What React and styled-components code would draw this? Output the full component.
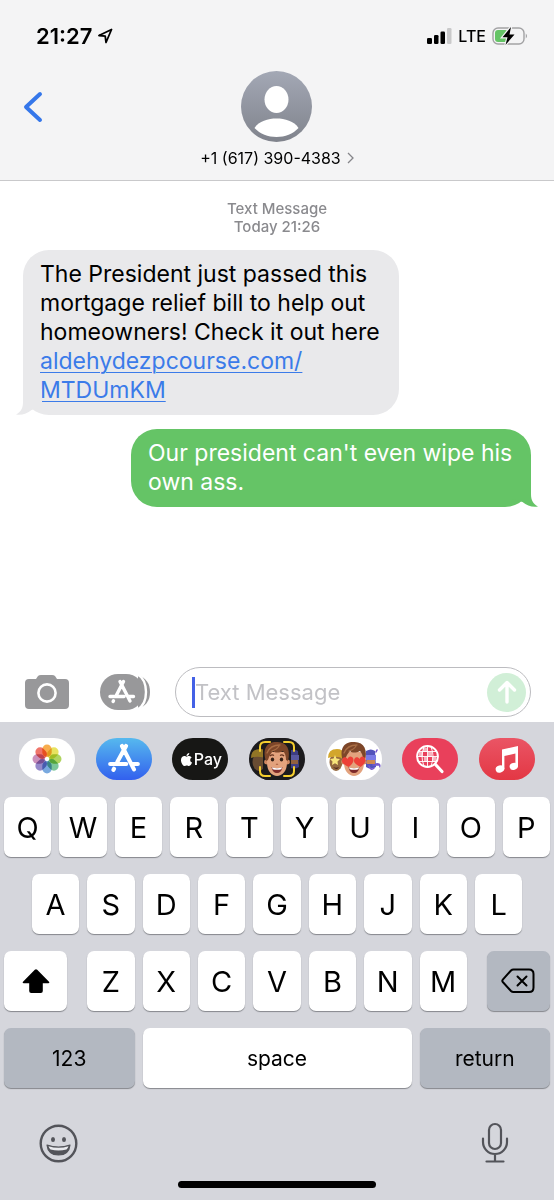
import { FaApple } from 'react-icons/fa';
import styled, { createGlobalStyle } from 'styled-components';

const GlobalStyle = createGlobalStyle`
  * {
    box-sizing: border-box;
  }

  body {
    margin: 0;
    background: #ffffff;
    color: #000000;
    font-family: Inter, "Liberation Sans", sans-serif;
  }

  button, input {
    font-family: inherit;
    color: inherit;
  }

  button {
    padding: 0;
    border: none;
    background: none;
  }

  svg {
    display: block;
    flex-shrink: 0;
  }
`;

const Screen = styled.div`
  min-height: 100vh;
  display: flex;
  flex-direction: column;
`;

const Header = styled.header`
  background: #f4f4f5;
  border-bottom: 1px solid #c9c9cb;
`;

const StatusBar = styled.div`
  display: flex;
  justify-content: space-between;
  align-items: center;
  height: 71px;
  padding: 0 26px 0 36px;
`;

const StatusGroup = styled.div`
  display: flex;
  align-items: center;
  gap: 6px;
`;

const Clock = styled.span`
  font-size: 22px;
  line-height: 24px;
  font-weight: 600;
`;

const Network = styled.span`
  font-size: 16px;
  line-height: 24px;
  font-weight: 500;
`;

const ContactBar = styled.div`
  display: grid;
  grid-template-columns: 1fr auto 1fr;
  padding: 0 22px 12px;
`;

const BackButton = styled.button`
  justify-self: start;
  align-self: start;
  padding: 20px 0;
`;

const Contact = styled.button`
  display: flex;
  flex-direction: column;
  align-items: center;
  gap: 6px;
`;

const ContactName = styled.span`
  display: flex;
  align-items: center;
  gap: 6px;
  font-size: 16px;
  line-height: 20px;
`;

const Thread = styled.main`
  flex: 1;
  display: flex;
  flex-direction: column;
  gap: 14px;
  padding: 19px 23px;
`;

const Timestamp = styled.div`
  text-align: center;
  font-size: 15px;
  line-height: 18px;
  color: #8a8a8e;
  font-weight: 500;
`;

const Bubble = styled.div`
  position: relative;
  align-self: ${({ $sent }) => ($sent ? 'flex-end' : 'flex-start')};
  max-width: ${({ $sent }) => ($sent ? '400px' : '376px')};
  padding: 10px 17px;
  border-radius: 26px;
  font-size: 23px;
  line-height: 29px;
  color: ${({ $sent }) => ($sent ? '#ffffff' : '#000000')};
  background: ${({ $sent }) => ($sent ? '#65c466' : '#e9e9eb')};

  a {
    color: #3b7be9;
    text-decoration-thickness: 1px;
    text-underline-offset: 3px;
  }
`;

const Tail = styled.svg`
  position: absolute;
  bottom: 0;
  ${({ $sent }) => ($sent ? 'right: -7px; transform: scaleX(-1);' : 'left: -7px;')}
`;

const Composer = styled.form`
  display: flex;
  align-items: center;
  padding: 0 23px 5px;
`;

const ComposerButton = styled.button`
  margin-right: ${({ $gap }) => $gap}px;
`;

const Field = styled.div`
  flex: 1;
  min-width: 0;
  display: flex;
  align-items: center;
  height: 50px;
  padding: 0 4px 0 16px;
  border: 1px solid #bcbcc0;
  border-radius: 25px;
`;

const Caret = styled.span`
  width: 3px;
  height: 31px;
  background: #4461e6;
`;

const MessageInput = styled.input`
  flex: 1;
  min-width: 0;
  padding: 0;
  border: none;
  outline: none;
  background: none;
  font-size: 22px;
  line-height: 29px;

  &::placeholder {
    color: #c2c2c6;
    opacity: 1;
  }
`;

const SendButton = styled.button`
  display: flex;
  align-items: center;
  justify-content: center;
  width: 39px;
  height: 39px;
  border-radius: 50%;
  background: #d1efd7;
`;

const Keyboard = styled.section`
  background: #d5d6dc;
`;

const AppStrip = styled.nav`
  display: flex;
  justify-content: space-between;
  padding: 16px 19px 17px;
`;

const AppPill = styled.button`
  display: flex;
  align-items: center;
  justify-content: center;
  width: 56px;
  height: 42px;
  border-radius: 21px;
  overflow: hidden;
  color: #ffffff;
  background: ${({ $bg }) => $bg};
`;

const PayLabel = styled.span`
  font-size: 16px;
  line-height: 20px;
  font-weight: 500;
`;

const KeyGrid = styled.div`
  display: grid;
  grid-template-columns: repeat(20, minmax(0, 1fr));
  gap: 17px 8px;
  padding: 0 4px;
`;

const Key = styled.button`
  display: flex;
  align-items: center;
  justify-content: center;
  height: 60px;
  grid-column: ${({ $start }) => $start || 'auto'} / span ${({ $span }) => $span || 2};
  margin: ${({ $margin }) => $margin || '0'};
  border-radius: 7px;
  box-shadow: 0 1px 1px #85878c;
  font-size: ${({ $word }) => ($word ? '21px' : '29px')};
  background: ${({ $dark }) => ($dark ? '#b3b8c1' : '#ffffff')};
`;

const KeyboardFooter = styled.div`
  display: flex;
  justify-content: space-between;
  align-items: flex-end;
  padding: 34px 45px 18px 39px;
  color: #53545a;
`;

const HomeIndicator = styled.div`
  width: 198px;
  height: 7px;
  margin: 0 auto 12px;
  border-radius: 4px;
  background: #000000;
`;

const AppStoreMark = ({ size }) => (
  <svg width={size} height={size} viewBox="0 0 30 30" fill="none" stroke="#ffffff" strokeWidth="3.6" strokeLinecap="round">
    <path d="M16.8 3.5 9.2 17.5M13.2 3.5l10.6 20.6M2.8 19.4h14.2M22.2 19.4h5M6.2 23.6l-.5 1" />
  </svg>
);

const petals = ['#f7a43a', '#e6e04e', '#a8d04f', '#6cc08f', '#6aa0dc', '#8a7cc4', '#c684b4', '#ee665a'];

const PhotosIcon = () => (
  <svg width="32" height="32" viewBox="0 0 32 32">
    {petals.map((color, i) => (
      <rect
        key={color}
        x="11.3"
        y="1.5"
        width="9.4"
        height="12.5"
        rx="4.7"
        fill={color}
        style={{ mixBlendMode: 'multiply' }}
        opacity="0.9"
        transform={`rotate(${i * 45} 16 16)`}
      />
    ))}
  </svg>
);

const SideHeads = () => (
  <>
    <ellipse cx="10" cy="24" rx="6.5" ry="9" fill="#94683f" />
    <path d="M2 20q0-9 9-9 6 0 7 5v5q-8-4-16-1z" fill="#d3a62c" />
    <path d="M40 13q5-3 9 0l1 16q-5 3-10 0z" fill="#5252bb" />
    <path d="M40 17h10v5H40z" fill="#7b7be6" />
    <path d="M41 22h8v4h-8z" fill="#cf8652" />
  </>
);

const Face = () => (
  <>
    <circle cx="17.5" cy="24" r="2.4" fill="#cf8862" />
    <circle cx="38.500" cy="24" r="2.4" fill="#cf8862" />
    <path d="M18 14h20v11c0 8-5 13-10 13s-10-5-10-13z" fill="#e3a27d" />
    <path d="M17 23C13 11 18 4 27 4c11-1 15 8 12 19l-2-1c0-4-1-7-3-9-4 2-8 2-10 0-2 2-4 5-5 9z" fill="#7d4629" />
    <path d="M18 15c2-5 7-8 13-8M23 13c3-1 6-3 7-5" stroke="#a96d44" strokeWidth="1.3" fill="none" strokeLinecap="round" />
    <path d="M22.500 29q5.500 2.500 11 0-1 6-5.500 6t-5.500-6z" fill="#7d2a2a" />
    <path d="M23 29.300q5 2 10 0l-.6 1.900q-4.400 1.200-8.800 0z" fill="#ffffff" />
  </>
);

const MemojiIcon = () => (
  <svg width="56" height="42" viewBox="0 0 56 42">
    <g opacity="0.65"><SideHeads /></g>
    <path d="M14 0h28v42H14z" fill="#1c1b1d" />
    <Face />
    <ellipse cx="23.500" cy="21.500" rx="1.700" ry="2" fill="#352016" />
    <ellipse cx="32.500" cy="21.500" rx="1.700" ry="2" fill="#352016" />
    <path d="M21 18q2-2 4-.5M31 17.500q2-1.500 4 .5" stroke="#67341f" strokeWidth="1.200" fill="none" />
    <path d="M27 26q1 .8 2 0" stroke="#b56c4b" strokeWidth="1.200" fill="none" />
    <path d="M11 13V9q0-5 5-5h5M35 4h5q5 0 5 5v4M45 29v4q0 5-5 5h-5M21 38h-5q-5 0-5-5v-4" stroke="#f4ce2e" strokeWidth="2" fill="none" strokeLinecap="round" />
  </svg>
);

const heart = 'M0 5C-5 2-7-1-5-4c2-2 4-1 5 1 1-2 3-3 5-1 2 3 0 6-5 9z';

const StickersIcon = () => (
  <svg width="56" height="42" viewBox="0 0 56 42">
    <SideHeads />
    <path d="M9 17l1.500 3.500 3.500.5-2.500 2.500.5 3.500-3-1.800-3 1.800.5-3.500L4 21l3.500-.5z" fill="#f8e47a" />
    <path d="M7 29q3 1.500 6 0-2 4-6 0z" fill="#4d241b" />
    <path d="M43 28q2 5 5 2M50 26q4-1 4 3M50 14l1-2M47 27h6" stroke="#7659ce" strokeWidth="1.600" fill="none" strokeLinecap="round" />
    <Face />
    <path d={heart} transform="translate(22 24) rotate(-8)" fill="#ed4037" />
    <path d={heart} transform="translate(34 24) rotate(-8)" fill="#ed4037" />
  </svg>
);

const ImagesIcon = () => (
  <svg width="30" height="30" viewBox="0 0 30 30" fill="none" stroke="#ffffff">
    <path d="M8 4h4v4H8zM13 8h4v5h-4zM4 8h4v5H4zM9 13h4v5H9zM17 13h4v5h-4z" fill="#ffffff" fillOpacity="0.6" stroke="none" />
    <circle cx="12.5" cy="12.5" r="10.4" strokeWidth="2" />
    <path d="M12.5 2v21M2 12.5h21M4 7.5h17M4 17.5h17M9 3q-4 9 0 19M16 3q4 9 0 19" strokeWidth="0.9" />
    <path d="M20.5 20.5l6.5 7" strokeWidth="3.2" strokeLinecap="round" />
  </svg>
);

const MusicIcon = () => (
  <svg width="26" height="30" viewBox="0 0 26 30" fill="#ffffff">
    <path d="M8 5.6 24 2v20h-2.6V9.6L10.4 12v13H8z" />
    <ellipse cx="6" cy="25" rx="4.4" ry="3.5" transform="rotate(-15 6 25)" />
    <ellipse cx="19.8" cy="22.3" rx="4.2" ry="3.5" transform="rotate(-15 19.8 22.3)" />
  </svg>
);

const apps = [
  { name: 'Photos', bg: '#ffffff', icon: <PhotosIcon /> },
  { name: 'App Store', bg: 'linear-gradient(#56b9ee, #3260ee)', icon: <AppStoreMark size={34} /> },
  { name: 'Apple Pay', bg: '#171715', icon: <><FaApple size={15} /><PayLabel>Pay</PayLabel></> },
  { name: 'Memoji', bg: '#1c1b1d', icon: <MemojiIcon /> },
  { name: 'Stickers', bg: '#ffffff', icon: <StickersIcon /> },
  { name: 'Images', bg: '#e9405b', icon: <ImagesIcon /> },
  { name: 'Music', bg: 'linear-gradient(#ea5565, #e33744)', icon: <MusicIcon /> },
];

const BubbleTail = ({ sent }) => (
  <Tail $sent={sent} width="26" height="26" viewBox="0 0 26 26" fill={sent ? '#65c466' : '#e9e9eb'} aria-hidden="true">
    <path d="M7 0v13c0 6-2 10-7 12.5 6 1 11-1 15.5-4.500L26 18V0z" />
  </Tail>
);

const App = () => (
  <Screen>
    <GlobalStyle />
    <Header>
      <StatusBar>
        <StatusGroup>
          <Clock>21:27</Clock>
          <svg width="15" height="16" viewBox="0 0 15 16" fill="none" stroke="#000000" strokeWidth="1.8" strokeLinejoin="round">
            <path d="M13.5 1.5 1 7.5l6.2.7.8 6.3z" />
          </svg>
        </StatusGroup>
        <StatusGroup>
          <svg width="25" height="16" viewBox="0 0 25 16">
            <rect x="0" y="10" width="5" height="6" rx="1.3" />
            <rect x="7" y="7" width="4.5" height="9" rx="1.3" />
            <rect x="13.5" y="3.5" width="4.5" height="12.5" rx="1.3" />
            <rect x="20" y="0" width="4.5" height="16" rx="1.3" fill="#c9c9ca" />
          </svg>
          <Network>LTE</Network>
          <svg width="36" height="20" viewBox="0 0 36 20">
            <rect x="1" y="2" width="31" height="16" rx="5" fill="none" stroke="#a2a2a4" strokeWidth="1.4" />
            <path d="M33.8 7.5q2 2.500 0 5z" fill="#8c8c8e" />
            <rect x="3" y="4" width="13" height="12" rx="3" fill="#65c466" />
            <path d="M19 1 10.5 11.2h5L13.5 19l9-10.5h-5z" fill="#000000" stroke="#f4f4f5" strokeWidth="2.4" paintOrder="stroke" />
          </svg>
        </StatusGroup>
      </StatusBar>
      <ContactBar>
        <BackButton type="button" aria-label="Back">
          <svg width="22" height="32" viewBox="0 0 22 32" fill="none" stroke="#3577ea" strokeWidth="4" strokeLinecap="round" strokeLinejoin="round">
            <path d="M18 3 4 16l14 13" />
          </svg>
        </BackButton>
        <Contact type="button">
          <svg width="71" height="71" viewBox="0 0 71 71">
            <defs>
              <linearGradient id="avatar" x1="0" y1="0" x2="0" y2="1">
                <stop offset="0" stopColor="#a3a8b5" />
                <stop offset="1" stopColor="#80838c" />
              </linearGradient>
            </defs>
            <circle cx="35.5" cy="35.5" r="35.5" fill="url(#avatar)" />
            <ellipse cx="35.5" cy="28.5" rx="12" ry="13.5" fill="#ffffff" />
            <path d="M13.5 57C18 50 27 47.5 35.5 47.5S53 50 57.5 57C52 63 44 66 35.5 66S19 63 13.5 57z" fill="#ffffff" />
          </svg>
          <ContactName>
            +1 (617) 390-4383
            <svg width="7" height="12" viewBox="0 0 7 12" fill="none" stroke="#85858a" strokeWidth="1.3">
              <path d="M1 1l5 5-5 5" />
            </svg>
          </ContactName>
        </Contact>
      </ContactBar>
    </Header>

    <Thread>
      <Timestamp>
        <div>Text Message</div>
        <div>Today 21:26</div>
      </Timestamp>
      <Bubble>
        <BubbleTail />
        The President just passed this mortgage relief bill to help out homeowners! Check it out here{' '}
        <a href="#link">aldehydezpcourse.com/<br />MTDUmKM</a>
      </Bubble>
      <Bubble $sent>
        <BubbleTail sent />
        Our president can't even wipe his own ass.
      </Bubble>
    </Thread>

    <Composer onSubmit={(e) => e.preventDefault()}>
      <ComposerButton type="button" aria-label="Camera" $gap={29}>
        <svg width="48" height="36" viewBox="0 0 48 36">
          <path d="M6 5h7l2-3q1-1 3-1h11q2 0 3 1l2 3h8q4 0 4 4v22q0 4-4 4H6q-4 0-4-4V9q0-4 4-4z" fill="#98989a" />
          <circle cx="24" cy="19" r="8.6" fill="none" stroke="#ffffff" strokeWidth="2.6" />
        </svg>
      </ComposerButton>
      <ComposerButton type="button" aria-label="Apps" $gap={25}>
        <svg width="50" height="36" viewBox="0 0 50 36">
          <path d="M38 1.5Q50 5 50 18T38 34.5z" fill="#98989a" />
          <rect x="0" y="0" width="44" height="36" rx="18" fill="#98989a" />
          <path d="M37 0q9 5 9 18t-9 18" stroke="#ffffff" strokeWidth="2.4" fill="none" />
          <g transform="translate(7 3)" stroke="#ffffff" strokeWidth="3.4" strokeLinecap="round" fill="none">
            <path d="M16.5 4.5 9.5 18M13 4.5l10 19.5M3 19.5h14M22 19.5h4.5M6.5 23.8l-.4.8" />
          </g>
        </svg>
      </ComposerButton>
      <Field>
        <Caret />
        <MessageInput type="text" aria-label="Message" placeholder="Text Message" />
        <SendButton type="submit" aria-label="Send">
          <svg width="20" height="24" viewBox="0 0 20 24" fill="none" stroke="#ffffff" strokeWidth="3.4" strokeLinecap="round" strokeLinejoin="round">
            <path d="M10 22V3M2.5 10 10 2.5l7.5 7.5" />
          </svg>
        </SendButton>
      </Field>
    </Composer>

    <Keyboard>
      <AppStrip>
        {apps.map(({ name, bg, icon }) => (
          <AppPill key={name} type="button" aria-label={name} $bg={bg}>{icon}</AppPill>
        ))}
      </AppStrip>
      <KeyGrid>
        {[...'QWERTYUIOP'].map((letter) => <Key key={letter} type="button">{letter}</Key>)}
        {[...'ASDFGHJKL'].map((letter, i) => (
          <Key key={letter} type="button" $start={i === 0 ? 2 : undefined}>{letter}</Key>
        ))}
        <Key type="button" aria-label="Shift" $start={1} $span={3} $margin="0 12px 0 0">
          <svg width="28" height="25" viewBox="0 0 28 25">
            <path d="M12.8.8q1.2-1.1 2.4 0L27 12.8q1 1.4-.8 1.4h-5.4v7.8q0 2-2 2H9.2q-2 0-2-2v-7.8H1.8Q0 14.2 1 12.8z" />
          </svg>
        </Key>
        {[...'ZXCVBNM'].map((letter) => <Key key={letter} type="button">{letter}</Key>)}
        <Key type="button" aria-label="Delete" $span={3} $margin="0 0 0 12px" $dark>
          <svg width="34" height="26" viewBox="0 0 34 26" fill="none" stroke="#000000" strokeWidth="2" strokeLinecap="round" strokeLinejoin="round">
            <path d="M12.5 1.5H28q4.500 0 4.500 4.500v13.500q0 4.500-4.500 4.500H12.500q-1.500 0-2.500-1L1.800 14q-1-1.200 0-2.400L10 2.500q1-1 2.500-1z" />
            <path d="M16.500 8.500l9 9M25.500 8.500l-9 9" />
          </svg>
        </Key>
        <Key type="button" $span={5} $word $dark>123</Key>
        <Key type="button" $span={10} $word>space</Key>
        <Key type="button" $span={5} $word $dark>return</Key>
      </KeyGrid>
      <KeyboardFooter>
        <button type="button" aria-label="Emoji">
          <svg width="39" height="39" viewBox="0 0 39 39" fill="none" stroke="currentColor" strokeWidth="2.4">
            <circle cx="19.5" cy="19.5" r="17.8" />
            <ellipse cx="14" cy="15.5" rx="2" ry="2.5" fill="currentColor" stroke="none" />
            <ellipse cx="25" cy="15.5" rx="2" ry="2.5" fill="currentColor" stroke="none" />
            <path d="M8 21q11.5 4 23 0-1 10-11.5 10T8 21z" fill="currentColor" strokeWidth="1.2" strokeLinejoin="round" />
            <path d="M9.5 22.2q10 3.2 20 0-.5 2-2 3.300-8 2-16 0-1.500-1.300-2-3.300z" fill="#e9eaee" stroke="none" />
          </svg>
        </button>
        <button type="button" aria-label="Dictate">
          <svg width="28" height="41" viewBox="0 0 28 41" fill="none" stroke="currentColor" strokeWidth="2.2" strokeLinecap="round">
            <rect x="8" y="2" width="12" height="25" rx="6" />
            <path d="M2 16.5V20a12 12 0 0 0 24 0v-3.500M14 32v7.500M5.500 39.500h17" />
          </svg>
        </button>
      </KeyboardFooter>
      <HomeIndicator />
    </Keyboard>
  </Screen>
);

export default App;
